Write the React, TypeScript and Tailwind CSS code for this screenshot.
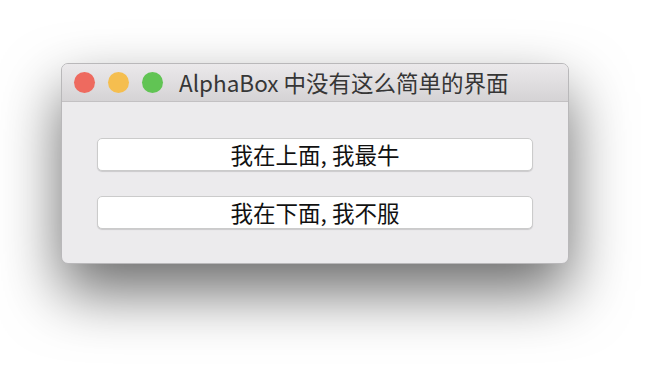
import React from 'react';

const font = { fontFamily: '"Noto Sans CJK SC", "Noto Sans", sans-serif' };

const Light: React.FC<{ color: string }> = ({ color }) => (
  <span className={`block w-[21px] h-[21px] rounded-full ${color}`} />
);

export default function App() {
  return (
    <div className="w-[650px] h-[372px] bg-white overflow-hidden pt-[63px] pl-[61px]" style={font}>
      <div className="w-[508px] h-[201px] rounded-[7px] bg-[#ecebed] border border-[#b9b8ba] shadow-[0_28px_60px_rgba(0,0,0,0.58)] flex flex-col overflow-hidden">
        <div className="h-[38px] shrink-0 flex items-center bg-gradient-to-b from-[#ebe9eb] to-[#d5d3d5] border-b border-[#c3c1c3] pl-[12px]">
          <div className="flex items-center gap-[13px]">
            <Light color="bg-[#ee6a5f]" />
            <Light color="bg-[#f5be4f]" />
            <Light color="bg-[#61c454]" />
          </div>
          <span className="ml-[16px] text-[22.5px] leading-none text-[#363636] whitespace-nowrap">
            AlphaBox 中没有这么简单的界面
          </span>
        </div>
        <div className="flex flex-col px-[35px] pt-[36px] gap-[25px]">
          <button className="h-[33px] bg-white rounded-[5px] border border-[#cbcbcb] shadow-[0_1px_1px_rgba(0,0,0,0.14)] text-[22.5px] leading-none text-[#111]">
            我在上面, 我最牛
          </button>
          <button className="h-[33px] bg-white rounded-[5px] border border-[#cbcbcb] shadow-[0_1px_1px_rgba(0,0,0,0.14)] text-[22.5px] leading-none text-[#111]">
            我在下面, 我不服
          </button>
        </div>
      </div>
    </div>
  );
}
